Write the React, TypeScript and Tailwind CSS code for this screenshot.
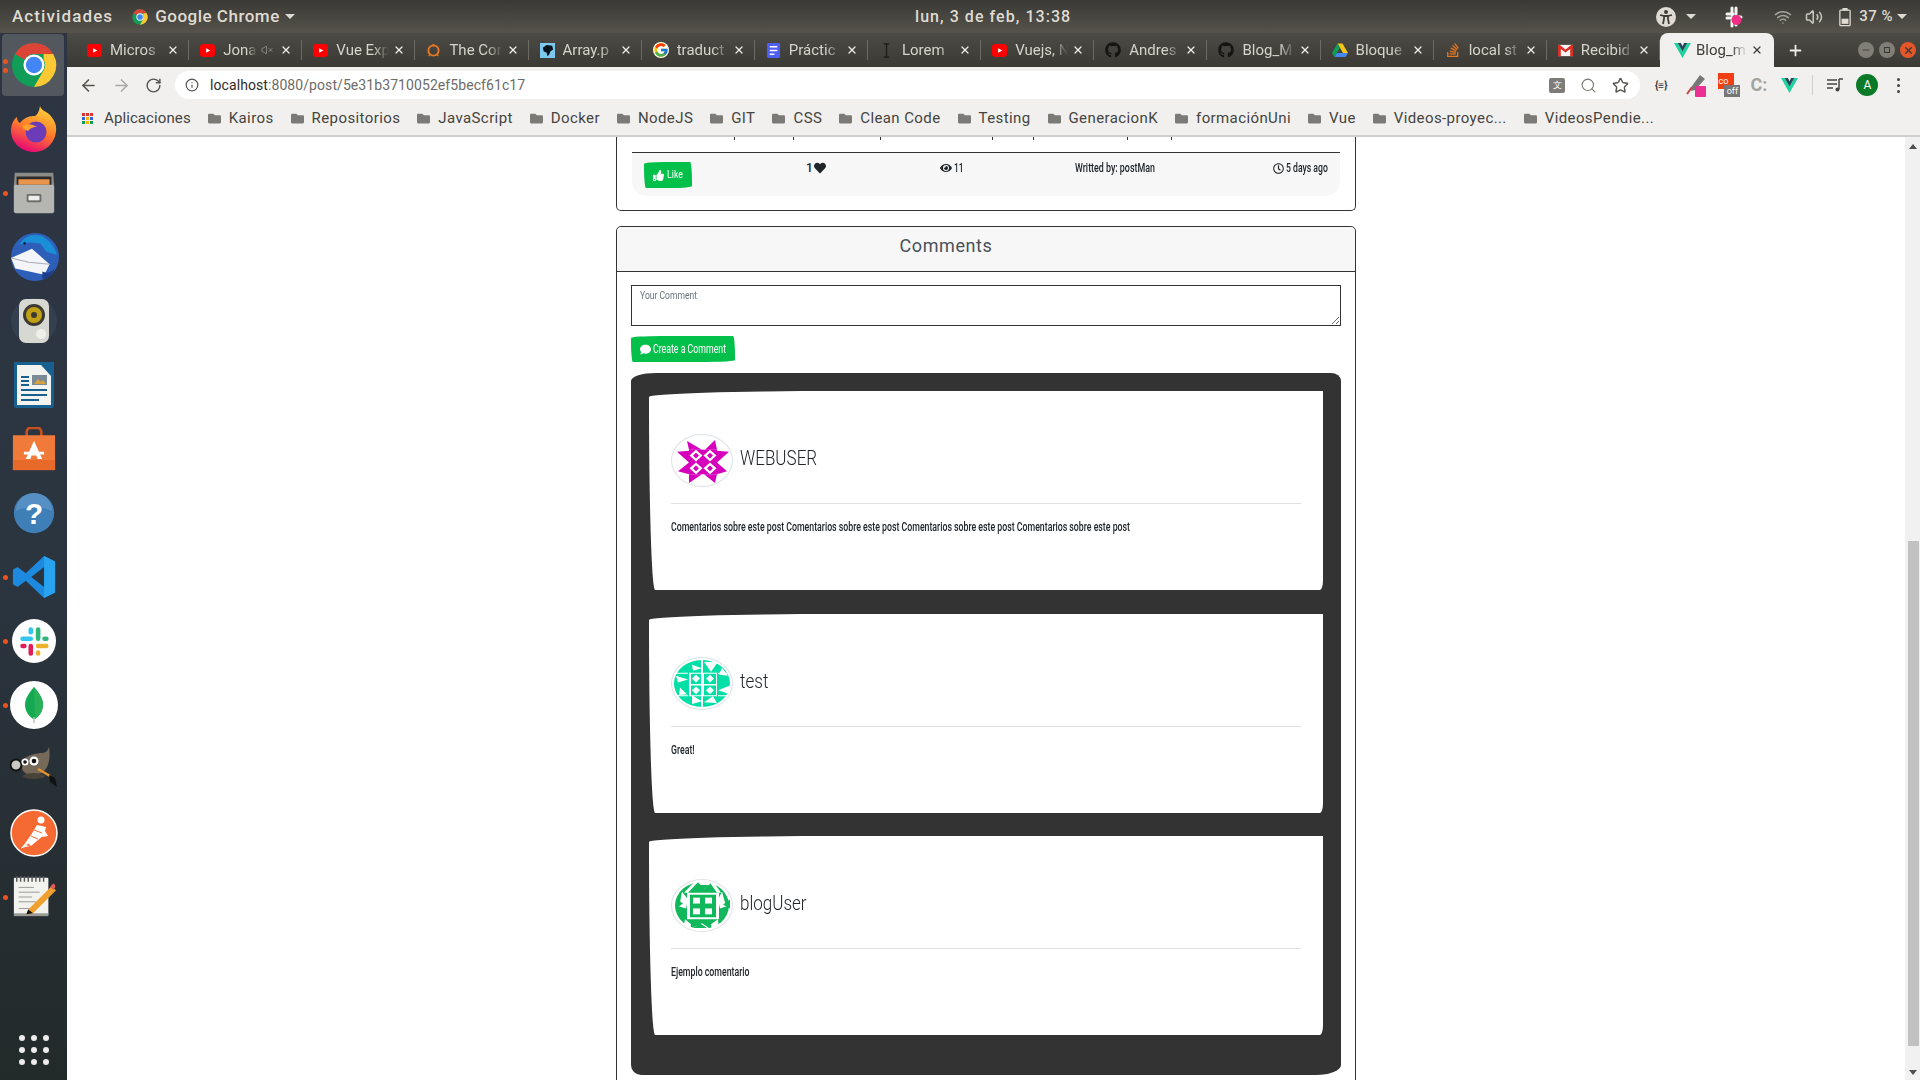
import React from 'react';
import {
  FaThumbsUp, FaHeart, FaEye, FaRegClock, FaComment, FaGithub, FaStackOverflow, FaFolder,
} from 'react-icons/fa';
import { FcGoogle } from 'react-icons/fc';
import { ArrowLeft, ArrowRight, RotateCw, Info, Search, Star, Plus, X, Minus, Wifi, Volume2, VolumeX } from 'lucide-react';

// favicons
const YouTube = () => (
  <svg viewBox="0 0 16 16" className="w-[15px] h-[15px] shrink-0">
    <rect x="0" y="1" width="16" height="14" rx="3.5" fill="#f00" />
    <path d="M6.5 5.5 11 8l-4.5 2.5z" fill="#fff" />
  </svg>
);
const CoIcon = () => (
  <svg viewBox="0 0 16 16" className="w-[15px] h-[15px] shrink-0">
    <circle cx="8" cy="8" r="5.5" fill="none" stroke="#e8771f" strokeWidth="2" />
    <circle cx="8" cy="2.5" r="1.4" fill="#e8771f" />
    <path d="M4 12l-1 2M12 12l1 2" stroke="#e8771f" strokeWidth="1.4" />
  </svg>
);
const ArrayIcon = () => (
  <svg viewBox="0 0 16 16" className="w-[15px] h-[15px] shrink-0">
    <rect width="16" height="16" fill="#7cc8ee" />
    <path d="M3 5l4-3 6 1 1 4-3 2-1 3-2 2-1-4-3-1z" fill="#06121c" />
  </svg>
);
const DocsIcon = () => (
  <svg viewBox="0 0 16 16" className="w-[15px] h-[17px] shrink-0">
    <rect x="1" width="14" height="16" rx="1.5" fill="#4e5ff0" />
    <path d="M4 4h8M4 8h8M4 12h5" stroke="#fff" strokeWidth="1.6" />
  </svg>
);
const LoremIcon = () => (
  <svg viewBox="0 0 16 16" className="w-[15px] h-[15px] shrink-0">
    <path d="M5 1h6M8 1v14M5 15h6" stroke="#1c1b18" strokeWidth="1.4" fill="none" />
  </svg>
);
const DriveIcon = () => (
  <svg viewBox="0 0 16 16" className="w-[16px] h-[16px] shrink-0">
    <path d="M5.5 1.5h5L16 11h-5z" fill="#f5c518" />
    <path d="M5.5 1.5 0 11l2.500 4 5.500-9.500z" fill="#109d58" />
    <path d="M2.500 15h11l2.500-4H5z" fill="#4688f1" />
  </svg>
);
const GmailIcon = () => (
  <svg viewBox="0 0 16 16" className="w-[15px] h-[15px] shrink-0">
    <rect y="2" width="16" height="12" fill="#f4f4f4" />
    <path d="M0 2v12h3V6.500L8 10l5-3.500V14h3V2h-2L8 7 2 2z" fill="#d93025" />
  </svg>
);
const VueIcon = ({ cls = 'w-[17px] h-[17px]' }: { cls?: string }) => (
  <svg viewBox="0 0 16 16" className={`${cls} shrink-0`}>
    <path d="M0 1h3.500L8 9l4.500-8H16L8 15z" fill="#1ed3a0" />
    <path d="M3.500 1H6.500L8 4l1.500-3h3L8 9z" fill="#24475b" />
  </svg>
);

const tabs: { title: string; icon: React.ReactNode; muted?: boolean }[] = [
  { title: 'Micros', icon: <YouTube /> },
  { title: 'Jona', icon: <YouTube />, muted: true },
  { title: 'Vue Exp', icon: <YouTube /> },
  { title: 'The Cor', icon: <CoIcon /> },
  { title: 'Array.p', icon: <ArrayIcon /> },
  { title: 'traduct', icon: <FcGoogle className="w-[16px] h-[16px] shrink-0 bg-white rounded-full" /> },
  { title: 'Práctic', icon: <DocsIcon /> },
  { title: 'Lorem', icon: <LoremIcon /> },
  { title: 'Vuejs, N', icon: <YouTube /> },
  { title: 'Andres', icon: <FaGithub className="w-[16px] h-[16px] shrink-0 text-[#161412]" /> },
  { title: 'Blog_M', icon: <FaGithub className="w-[16px] h-[16px] shrink-0 text-[#161412]" /> },
  { title: 'Bloque', icon: <DriveIcon /> },
  { title: 'local st', icon: <FaStackOverflow className="w-[16px] h-[16px] shrink-0 text-[#e8771f]" /> },
  { title: 'Recibid', icon: <GmailIcon /> },
];

const bookmarks = [
  'Kairos', 'Repositorios', 'JavaScript', 'Docker', 'NodeJS', 'GIT', 'CSS', 'Clean Code', 'Testing',
  'GeneracionK', 'formaciónUni', 'Vue', 'Videos-proyec...', 'VideosPendie...',
];

const ChromeLogo = ({ cls }: { cls: string }) => (
  <svg viewBox="0 0 48 48" className={cls}>
    <circle cx="24" cy="24" r="23" fill="#0f9d58" />
    <path d="M24 1a23 23 0 0 1 20 11.500H24a11.500 11.500 0 0 0-10 5.800L4.100 12.500A23 23 0 0 1 24 1z" fill="#db4437" />
    <path d="M44 12.500A23 23 0 0 1 24 47l10-17.200A11.500 11.500 0 0 0 34 18.300V12.500z" fill="#fcc934" />
    <circle cx="24" cy="24" r="11" fill="#fff" />
    <circle cx="24" cy="24" r="8.500" fill="#4285f4" />
  </svg>
);

// dock icons, all on a 48 box
const FirefoxLogo = () => (
  <svg viewBox="0 0 48 48" className="w-[48px] h-[48px]">
    <defs>
      <linearGradient id="ffx" x1="0.7" y1="0" x2="0.3" y2="1">
        <stop offset="0" stopColor="#ffd43a" />
        <stop offset="0.5" stopColor="#ff7a2a" />
        <stop offset="1" stopColor="#e6007a" />
      </linearGradient>
    </defs>
    <path d="M30 1c1 4 5 5 9 8 5 5 8 11 7 17-1 12-10 21-22 21C11 47 1 37 1 26 1 20 3 15 7 12c0 3 1 5 3 6 3-4 8-7 13-7 3 1 6-3 7-10z" fill="url(#ffx)" />
    <circle cx="26" cy="27" r="10.500" fill="#6b3bb8" />
    <path d="M12 21c5-3 11-2 15 1-5 0-7 2-9 4-2-1-5-2-6-5z" fill="#ffa12c" />
  </svg>
);
const FilesLogo = () => (
  <svg viewBox="0 0 48 48" className="w-[44px] h-[44px]">
    <path d="M3 2h42l1 14H2z" fill="#8b8b88" />
    <rect x="5" y="6" width="38" height="10" fill="#2c2a28" />
    <rect x="7" y="9" width="34" height="6" fill="#e8944a" />
    <rect x="2" y="15" width="44" height="31" rx="2" fill="#b5b5b2" />
    <rect x="16" y="25" width="16" height="9" rx="1.500" fill="#6b6b68" />
    <rect x="18" y="27" width="12" height="5" fill="#eee" />
  </svg>
);
const ThunderbirdLogo = () => (
  <svg viewBox="0 0 48 48" className="w-[50px] h-[50px]">
    <circle cx="25" cy="24" r="23" fill="#2e5fb8" />
    <path d="M10 12c4-8 14-11 22-8 7 4 12 10 14 18l-10-3-6-8-10-1z" fill="#1a8fd8" />
    <circle cx="15" cy="11" r="1.300" fill="#10214a" />
    <path d="M2 25l20-9 17 15-5 10-28-6z" fill="#f4f5f8" />
    <path d="M2 25l17 4 20 2" fill="none" stroke="#aab" strokeWidth="1" />
    <path d="M32 38c4 2 8 1 12-3-2 6-6 10-12 10z" fill="#1d3e8a" />
  </svg>
);
const SpeakerLogo = () => (
  <svg viewBox="0 0 48 48" className="w-[48px] h-[48px]">
    <circle cx="24" cy="24" r="23" fill="#45536a" opacity=".35" />
    <rect x="9" y="2" width="30" height="44" rx="7" fill="#d8d8d2" />
    <circle cx="24" cy="18" r="11" fill="#3b3a34" />
    <circle cx="24" cy="18" r="8" fill="#c2a114" />
    <circle cx="24" cy="18" r="3" fill="#3b3a34" />
    <circle cx="31" cy="37" r="5" fill="#efefea" />
  </svg>
);
const WriterLogo = () => (
  <svg viewBox="0 0 48 48" className="w-[48px] h-[48px]">
    <path d="M4 1h40v44a2 2 0 0 1-2 2H6a2 2 0 0 1-2-2z" fill="#18608f" />
    <path d="M7 4h24l10 11v29H7z" fill="#f3f3f0" />
    <path d="M33 3h11v11z" fill="#18608f" />
    <rect x="22" y="14" width="15" height="10" fill="#7b8a95" />
    <path d="M24 23l4-5 3 3 2-2 3 4z" fill="#d7a23a" />
    <path d="M11 16h8M11 20h8M11 24h8M11 29h26M11 34h26M11 39h18" stroke="#18608f" strokeWidth="2" />
  </svg>
);
const SoftwareLogo = () => (
  <svg viewBox="0 0 48 48" className="w-[44px] h-[44px]">
    <path d="M16 12V6c0-3 2-5 4-5h8c2 0 4 2 4 5v6" fill="none" stroke="#c8501e" strokeWidth="3" />
    <rect x="1" y="9" width="46" height="38" fill="#ef7a3a" />
    <rect x="1" y="36" width="46" height="11" fill="#e86a2a" />
    <path d="M24 15l9 20h-5l-1.500-4h-5L20 35h-5z" fill="#fff" />
    <rect x="13" y="27" width="22" height="3" fill="#fff" />
  </svg>
);
const HelpLogo = () => (
  <svg viewBox="0 0 48 48" className="w-[42px] h-[42px]">
    <circle cx="24" cy="24" r="23" fill="#3f7fb8" />
    <path d="M3 22a21 21 0 0 1 42 0c-10-6-32-6-42 0z" fill="#6da0cd" opacity=".5" />
    <text x="24" y="36" textAnchor="middle" fontSize="34" fontWeight="700" fill="#fff" fontFamily="Liberation Sans, sans-serif">?</text>
  </svg>
);
const VsCodeLogo = () => (
  <svg viewBox="0 0 48 48" className="w-[44px] h-[44px]">
    <path d="M35 1l12 6v34l-12 6-20-19-9 7-5-3V16l5-3 9 7zM35 13L21 24l14 11z" fill="#1d8ae0" />
    <path d="M35 1l12 6v34l-12 6z" fill="#27a3ef" />
  </svg>
);
const SlackLogo = () => (
  <svg viewBox="0 0 48 48" className="w-[44px] h-[44px]">
    <circle cx="24" cy="24" r="24" fill="#fff" />
    <rect x="9" y="19" width="14" height="5" rx="2.500" fill="#36c5f0" />
    <rect x="18" y="9" width="5" height="8" rx="2.500" fill="#36c5f0" />
    <rect x="26" y="9" width="5" height="15" rx="2.500" fill="#2eb67d" />
    <rect x="33" y="19" width="7" height="5" rx="2.500" fill="#2eb67d" />
    <rect x="26" y="27" width="14" height="5" rx="2.500" fill="#ecb22e" />
    <rect x="26" y="34" width="5" height="6" rx="2.500" fill="#ecb22e" />
    <rect x="18" y="27" width="5" height="13" rx="2.500" fill="#e01e5a" />
    <rect x="9" y="27" width="7" height="5" rx="2.500" fill="#e01e5a" />
  </svg>
);
const MongoLogo = () => (
  <svg viewBox="0 0 48 48" className="w-[48px] h-[48px]">
    <circle cx="24" cy="24" r="24" fill="#fff" />
    <path d="M24 6c6 7 9 12 9 18 0 7-5 12-8 14h-2c-3-2-8-7-8-14 0-6 3-11 9-18z" fill="#13aa52" />
    <path d="M24 6c6 7 9 12 9 18 0 7-5 12-8 14z" fill="#2bb05a" />
    <path d="M24 36v6" stroke="#b8c4bc" strokeWidth="1.500" />
  </svg>
);
const GimpLogo = () => (
  <svg viewBox="0 0 48 48" className="w-[48px] h-[48px]">
    <path d="M11 16c6-6 16-8 21-8 4 0 6-3 7-6 1 7 1 14-2 20-2 5-8 8-15 8s-12-5-11-14z" fill="#75695a" />
    <ellipse cx="24" cy="31" rx="11" ry="3" fill="#4a4339" />
    <circle cx="6" cy="20" r="5.500" fill="#c9c9c4" stroke="#111" strokeWidth="2" />
    <circle cx="15" cy="17" r="3.500" fill="#fff" />
    <circle cx="15" cy="17" r="1.800" fill="#111" />
    <circle cx="24" cy="16" r="4.500" fill="#fff" />
    <circle cx="24" cy="16" r="2.300" fill="#111" />
    <path d="M28 24l12 7" stroke="#e3942f" strokeWidth="2.500" />
    <path d="M39 30l6 3 2 9-7-5z" fill="#111" />
  </svg>
);
const PostmanLogo = () => (
  <svg viewBox="0 0 48 48" className="w-[48px] h-[48px]">
    <circle cx="24" cy="24" r="23" fill="#f56a32" stroke="#fff" strokeWidth="1.500" />
    <circle cx="31" cy="11" r="3.500" fill="#fff" />
    <path d="M27 16l9 2-2 8-13 11-2.500-2.500L11 40l5-7 5-7z" fill="#fff" />
    <path d="M35 22l3 5-6 1zM20 37l-9 2 3-3z" fill="#fff" />
    <path d="M24 21l8 3M21 27l7 3" stroke="#f56a32" strokeWidth="1" />
  </svg>
);
const NotepadLogo = () => (
  <svg viewBox="0 0 48 48" className="w-[46px] h-[46px]">
    <rect x="3" y="4" width="36" height="39" rx="1" fill="#f2f2ee" />
    <rect x="3" y="41" width="36" height="3" fill="#9a9a96" />
    <path d="M6 2v6M10 2v6M14 2v6M18 2v6M22 2v6M26 2v6M30 2v6M34 2v6" stroke="#555" strokeWidth="1.500" />
    <path d="M8 14h16M8 19h22M8 24h14M8 29h18M8 36h14" stroke="#999" strokeWidth="1" />
    <path d="M18 37l24-24 5 4-24 24-7 1z" fill="#efa02e" />
    <path d="M41 13l3-3c1-1 3 3 2 4l-2 3z" fill="#e25a5a" />
    <path d="M18 37l5 4-7 1z" fill="#111" />
  </svg>
);

const dock: { icon: React.ReactNode; dots?: number; active?: boolean }[] = [
  { icon: <ChromeLogo cls="w-[46px] h-[46px]" />, dots: 2, active: true },
  { icon: <FirefoxLogo /> },
  { icon: <FilesLogo />, dots: 1 },
  { icon: <ThunderbirdLogo /> },
  { icon: <SpeakerLogo /> },
  { icon: <WriterLogo /> },
  { icon: <SoftwareLogo /> },
  { icon: <HelpLogo /> },
  { icon: <VsCodeLogo />, dots: 1 },
  { icon: <SlackLogo />, dots: 1 },
  { icon: <MongoLogo />, dots: 1 },
  { icon: <GimpLogo /> },
  { icon: <PostmanLogo /> },
  { icon: <NotepadLogo />, dots: 1 },
];

const Dock: React.FC = () => (
  <aside className="w-[67px] shrink-0 flex flex-col bg-gradient-to-b from-[#2d3542] via-[#2b3540] to-[#232a2a]">
    {dock.map((d, i) => (
      <div key={i} className="relative h-[64px] flex items-center justify-center">
        {d.active && <div className="absolute left-[2px] right-[3px] top-[1px] bottom-[1px] rounded-[4px] bg-[#53585f]" />}
        {d.dots === 1 && <span className="absolute left-[3px] top-[30px] w-[5px] h-[5px] rounded-full bg-[#e95420]" />}
        {d.dots === 2 && (
          <span className="absolute left-[3px] top-[26px] flex flex-col gap-[4px]">
            <span className="w-[5px] h-[5px] rounded-full bg-[#e95420]" />
            <span className="w-[5px] h-[5px] rounded-full bg-[#e95420]" />
          </span>
        )}
        <div className="relative flex items-center justify-center">{d.icon}</div>
      </div>
    ))}
    <div className="mt-auto mb-[15px] grid grid-cols-3 gap-[6px] w-[30px] mx-auto">
      {Array.from({ length: 9 }).map((_, i) => (
        <span key={i} className="w-[6px] h-[6px] rounded-full bg-[#ececec]" />
      ))}
    </div>
  </aside>
);

const TopBar: React.FC = () => (
  <header className='h-[33px] shrink-0 flex items-center bg-gradient-to-b from-[#3a3935] to-[#55534b] text-[#dfdbd2] font-["Roboto",sans-serif] font-medium text-[16px]'>
    <div className="w-[915px] shrink-0 flex items-center">
      <span className="ml-[12px] text-[17px] tracking-[1.1px]">Actividades</span>
      <ChromeLogo cls="w-[16px] h-[16px] ml-[19px] mr-[7px]" />
      <span className="text-[17px] tracking-[0.5px]">Google Chrome</span>
      <span className="ml-[5px] w-0 h-0 border-x-[5px] border-x-transparent border-t-[5px] border-t-[#dfdbd2]" />
    </div>
    <span className="tracking-[1.05px]">lun, 3 de feb, 13:38</span>
    <div className="ml-auto flex items-center pr-[13px]">
      <span className="w-[20px] h-[20px] rounded-full bg-[#dfdbd2] flex items-center justify-center">
        <svg viewBox="0 0 20 20" className="w-[20px] h-[20px]">
          <circle cx="10" cy="5" r="2" fill="#3f3e39" />
          <path d="M4 8l4 1v3l-1 5M16 8l-4 1v3l1 5M8 9h4" stroke="#3f3e39" strokeWidth="1.800" fill="none" />
        </svg>
      </span>
      <span className="ml-[10px] w-0 h-0 border-x-[5px] border-x-transparent border-t-[5px] border-t-[#dfdbd2]" />
      <svg viewBox="0 0 24 24" className="ml-[26px] w-[24px] h-[24px]">
        <path d="M10 3v7M14 3v6M5 9h6M5 13h5M13 12h6M14 16v4M10 16v5" stroke="#f4f4f0" strokeWidth="3" strokeLinecap="round" />
        <circle cx="14.500" cy="15" r="5" fill="#ef2f86" />
      </svg>
      <Wifi className="ml-[28px] w-[18px] h-[18px] text-[#a5a39b]" />
      <Volume2 className="ml-[13px] w-[18px] h-[18px] text-[#c9c6bd]" />
      <svg viewBox="0 0 14 22" className="ml-[16px] w-[12px] h-[20px]">
        <rect x="1" y="3" width="12" height="18" rx="1" fill="none" stroke="#dfdbd2" strokeWidth="1.500" />
        <rect x="4" y="0.500" width="6" height="3" fill="#dfdbd2" />
        <rect x="3" y="13" width="8" height="6" fill="#dfdbd2" />
      </svg>
      <span className="ml-[8px] text-[15px] tracking-[0.5px]">37 %</span>
      <span className="ml-[4px] w-0 h-0 border-x-[5px] border-x-transparent border-t-[5px] border-t-[#dfdbd2]" />
    </div>
  </header>
);

const TabStrip: React.FC = () => (
  <div className='h-[34px] shrink-0 flex items-stretch pl-[9px] bg-gradient-to-b from-[#4c4b45] to-[#3a3934] font-["Roboto",sans-serif] text-[15px] text-[#d6d3ca]'>
    {tabs.map((t) => (
      <div key={t.title} className="w-[113.150px] shrink-0 flex items-center pl-[11px] pr-[9px] relative border-r border-[#6b6a63] my-[7px]">
        {t.icon}
        <span className="ml-[8px] mr-[4px] overflow-hidden whitespace-nowrap flex-1 [mask-image:linear-gradient(to_right,black_70%,transparent)]">{t.title}</span>
        {t.muted && <VolumeX className="w-[12px] h-[12px] text-[#8a8880] mr-[7px]" />}
        <X className="w-[12px] h-[12px] text-[#f0eee8] shrink-0" strokeWidth={2.500} />
      </div>
    ))}
    <div className="w-[114px] shrink-0 bg-[#f1f0ee] rounded-t-[8px] flex items-center pl-[14px] pr-[11px] text-[#3d3c37]">
      <VueIcon />
      <span className="ml-[5px] mr-[4px] whitespace-nowrap flex-1 [mask-image:linear-gradient(to_right,black_70%,transparent)]">Blog_m</span>
      <X className="w-[12px] h-[12px] text-[#3d3c37] shrink-0" strokeWidth={2.500} />
    </div>
    <Plus className="ml-[13px] self-center w-[17px] h-[17px] text-[#f0eee8]" strokeWidth={2.500} />
    <div className="ml-auto pr-[4px] flex items-center gap-[5px]">
      <span className="w-[16px] h-[16px] rounded-full bg-[#807e76] flex items-center justify-center"><Minus className="w-[10px] h-[10px] text-[#3a3934]" /></span>
      <span className="w-[16px] h-[16px] rounded-full bg-[#807e76] flex items-center justify-center"><span className="w-[6px] h-[6px] border border-[#3a3934]" /></span>
      <span className="w-[16px] h-[16px] rounded-full bg-[#e2562a] flex items-center justify-center"><X className="w-[11px] h-[11px] text-[#3a3934]" strokeWidth={3} /></span>
    </div>
  </div>
);

const Toolbar: React.FC = () => (
  <div className='h-[35px] shrink-0 flex items-center pt-[1px] bg-[#f1f0ee] font-["Roboto",sans-serif] text-[#55534e]'>
    <ArrowLeft className="ml-[12px] w-[19px] h-[19px]" />
    <ArrowRight className="ml-[14px] w-[19px] h-[19px] text-[#aaa9a5]" />
    <RotateCw className="ml-[14px] w-[17px] h-[17px]" />
    <div className="ml-[13px] w-[1465px] h-[28px] rounded-full bg-white flex items-center pl-[10px] pr-[11px]">
      <Info className="w-[14px] h-[14px]" />
      <span className="ml-[11px] text-[14px] tracking-[0.08px]"><span className="text-[#2c2b28]">localhost</span><span className="text-[#6d6c67]">:8080/post/5e31b3710052ef5becf61c17</span></span>
      <div className="ml-auto flex items-center gap-[15px]">
        <span className="w-[16px] h-[15px] bg-[#7d7c78] rounded-[2px] text-white text-[9px] leading-[15px] text-center">文</span>
        <Search className="w-[17px] h-[17px] text-[#77766f]" strokeWidth={1.500} />
        <Star className="w-[17px] h-[17px]" />
      </div>
    </div>
    <span className="ml-[15px] text-[10px] font-bold text-[#333]">{'{≡}'}</span>
    <svg viewBox="0 0 24 24" className="ml-[17px] w-[24px] h-[24px]">
      <path d="M16 2l5 4-10 11-4 1 1-5z" fill="#777" />
      <path d="M3 21l5-7" stroke="#c44" strokeWidth="2" />
      <rect x="11" y="13" width="11" height="11" rx="1" fill="#ec2f92" />
    </svg>
    <span className="relative ml-[10px] w-[22px] h-[24px]">
      <span className="absolute left-0 top-0 w-[16px] h-[16px] bg-[#f13e12] text-white text-[9px] leading-[16px]">co</span>
      <span className="absolute right-0 bottom-0 w-[16px] h-[12px] bg-[#777] text-white text-[9px] leading-[12px] text-center">off</span>
    </span>
    <span className="ml-[10px] text-[18px] font-bold text-[#a3a3a0] leading-none">C:</span>
    <VueIcon cls="ml-[14px] w-[17px] h-[17px]" />
    <span className="ml-[14px] w-px h-[20px] bg-[#cfcecb]" />
    <svg viewBox="0 0 16 16" className="ml-[14px] w-[16px] h-[16px]">
      <path d="M0 3h10M0 7h10M0 11h6M12 2h4M12 2v10" stroke="#444" strokeWidth="1.500" fill="none" />
      <circle cx="10.500" cy="12.500" r="2" fill="#444" />
    </svg>
    <span className="ml-[13px] w-[22px] h-[22px] rounded-full bg-[#0b7a28] text-white text-[12px] leading-[22px] text-center">A</span>
    <span className="ml-[19px] flex flex-col gap-[3px]">
      <span className="w-[3px] h-[3px] rounded-full bg-[#444]" />
      <span className="w-[3px] h-[3px] rounded-full bg-[#444]" />
      <span className="w-[3px] h-[3px] rounded-full bg-[#444]" />
    </span>
  </div>
);

const BookmarksBar: React.FC = () => (
  <div className='h-[35px] shrink-0 flex items-center bg-[#f1f0ee] border-b-2 border-[#cfcfcc] pl-[15px] font-["Roboto",sans-serif] text-[15px] text-[#45443f] tracking-[0.4px]'>
    <span className="grid grid-cols-3 gap-[1px] w-[11px] mr-[11px]">
      {['#d33','#d33','#d33','#3367d6','#f4b400','#3367d6','#0f9d58','#f4b400','#0f9d58'].map((c, i) => (
        <span key={i} className="w-[3px] h-[3px]" style={{ backgroundColor: c }} />
      ))}
    </span>
    <span className="tracking-[0.1px]">Aplicaciones</span>
    {bookmarks.map((b) => (
      <span key={b} className="flex items-center ml-[17px]">
        <FaFolder className="w-[13px] h-[13px] text-[#7b7a76] mr-[8px]" />
        {b}
      </span>
    ))}
  </div>
);

// gravatar-like identicons
const Avatar = ({ children }: { children: React.ReactNode }) => (
  <div className="w-[62px] h-[53px] shrink-0 overflow-hidden border border-[#dee2e6] rounded-[50%] bg-white">
    <svg viewBox="0 0 60 52" preserveAspectRatio="none" className="w-full h-full">{children}</svg>
  </div>
);

const WebUserAvatar = () => (
  <Avatar>
    <g fill="#d600bc">
      <path d="M15 6l15 9H17zM43 5L33 15h12zM5 17l12-1v12zM57 17l-12-1v12zM6 37l11-9v12zM55 37L45 28v12zM17 49l13-9H17zM43 49L32 40h13z" />
      <rect x="17" y="15" width="28" height="25" />
    </g>
    <g fill="#fff">
      <path d="M24 15l6.500 6-6.500 6-6.500-6zM38 15l6.500 6-6.500 6-6.500-6zM24 28l6.500 6-6.500 6-6.500-6zM38 28l6.500 6-6.500 6-6.500-6z" />
    </g>
    <g fill="#d600bc">
      <path d="M24 18l3 3-3 3-3-3zM38 18l3 3-3 3-3-3zM24 31l3 3-3 3-3-3zM38 31l3 3-3 3-3-3z" />
    </g>
  </Avatar>
);
const TestAvatar = () => (
  <Avatar>
    <ellipse cx="30" cy="26" rx="28" ry="24" fill="#00dfa5" />
    <g fill="#fff">
      <path d="M20 7l10 3.500L21 13zM32 4h14l-7 10zM4 18l12 4-10 3zM58 28l-12 5 12 4zM20 47l10-3-10-6zM32 45l9-6 4 7zM8 30l7 7-8 1zM50 10l6 8-9-1z" />
      <rect x="17" y="15" width="28" height="24" />
      <path d="M16 15H0v1h16zM46 15h14v1H46zM16 38H0v1h16zM46 38h14v1H46zM29 0h2v15h-2zM29 39h2v13h-2z" />
    </g>
    <g fill="#00dfa5">
      <path d="M19 16h10v10.500H19zM32 16h12v10.500H32zM19 28h10v10H19zM32 28h12v10H32z" />
    </g>
    <g fill="#fff">
      <path d="M24 17l4 4-4 4-4-4zM38 17l4 4-4 4-4-4zM24 29l4 4-4 4-4-4zM38 29l4 4-4 4-4-4z" />
    </g>
  </Avatar>
);
const BlogUserAvatar = () => (
  <Avatar>
    <ellipse cx="30" cy="26" rx="27" ry="24" fill="#10b85b" />
    <g fill="#fff">
      <rect x="15" y="13" width="32" height="27" />
      <path d="M24 0h4l-12 13h-4zM36 0h4l9 13h-4zM10 12l6 8-2 9-10-3 4-3zM50 12l-4 8 2 9 9-3-4-3zM13 40l6 5-1 7h-7zM46 40l-7 5 1 7h7zM24 0h14v4l-6 5zM18 52l4-4 8-4 7 5v3z" />
    </g>
    <g fill="#10b85b">
      <rect x="18" y="15" width="26" height="23" />
      <path d="M4 19l7 5-7 5zM58 20l-7 5 7 4zM24 5h13l-6 5zM21 49h14l-7-5z" />
    </g>
    <g fill="#fff">
      <rect x="21" y="18" width="7" height="6" />
      <rect x="33" y="18" width="7" height="6" />
      <rect x="21" y="29" width="7" height="6" />
      <rect x="33" y="29" width="7" height="6" />
    </g>
  </Avatar>
);

const comments = [
  { user: 'WEBUSER', text: 'Comentarios sobre este post Comentarios sobre este post Comentarios sobre este post Comentarios sobre este post', avatar: <WebUserAvatar /> },
  { user: 'test', text: 'Great!', avatar: <TestAvatar /> },
  { user: 'blogUser', text: 'Ejemplo comentario', avatar: <BlogUserAvatar /> },
];

const CommentCard = ({ user, text, avatar }: { user: string; text: string; avatar: React.ReactNode }) => (
  <div className="h-[199px] shrink-0 bg-white rounded-[190px_0_3px_6px/6px_0_10px_190px] pt-[43px] px-[22px]">
    <div className="flex items-center">
      {avatar}
      <span className="ml-[7px] pb-[4px] text-[21px] font-light text-[#212529] leading-none origin-left scale-x-[0.81] whitespace-nowrap">{user}</span>
    </div>
    <div className="mt-[16px] border-t border-[#dfdfdf]" />
    <p className="mt-[15px] text-[12px] font-medium leading-[16px] text-[#212529] origin-left scale-x-[0.73] whitespace-nowrap">{text}</p>
  </div>
);

const ticks = ['ml-[102px]', 'ml-[58px]', 'ml-[86px]', 'ml-[111px]', 'ml-[40px]', 'ml-[93px]', 'ml-[43px]'];

const Page: React.FC = () => (
  <main className='flex-1 min-h-0 flex bg-white font-["Roboto",sans-serif]'>
    <div className="flex-1 min-w-0 overflow-hidden">
      <div className="w-[740px] mx-auto text-[#212529]">
        {/* end of the post card, scrolled up */}
        <section className="h-[74px] border-x border-b border-[#333] rounded-b-[5px] px-[15px]">
          <div className="h-[3px] flex items-start">
            {ticks.map((t) => (
              <span key={t} className={`${t} w-px h-[3px] bg-[#333]`} />
            ))}
          </div>
          <div className="mt-[12px] h-[44px] border-t border-[#333] bg-[#f7f7f7] rounded-b-[15px] flex items-start pl-[12px] text-[12px] font-medium">
            <button className="mt-[9px] w-[48px] h-[26px] bg-[#03c04a] text-white text-[11px] font-normal rounded-[20px_2px_20px_2px/2px_20px_2px_20px] flex items-center pl-[9px] gap-[3px]">
              <FaThumbsUp className="w-[11px] h-[11px]" />
              <span className="w-[16px] origin-left scale-x-[0.8]">Like</span>
            </button>
            <span className="ml-[114px] mt-[7px] flex items-center gap-[1px] h-[16px]">1 <FaHeart className="w-[12px] h-[12px]" /></span>
            <span className="ml-[114px] mt-[7px] flex items-center gap-[2px] h-[16px]">
              <FaEye className="w-[12px] h-[12px]" />
              <span className="w-[9px] origin-left scale-x-[0.7]">11</span>
            </span>
            <span className="ml-[112px] mt-[7px] w-[80px] h-[16px] leading-[16px] whitespace-nowrap origin-left scale-x-[0.74]">Writted by: postMan</span>
            <span className="ml-auto mr-[13px] mt-[7px] flex items-center gap-[2px] h-[16px]">
              <FaRegClock className="w-[11px] h-[11px]" />
              <span className="w-[41px] whitespace-nowrap origin-left scale-x-[0.72]">5 days ago</span>
            </span>
          </div>
        </section>

        <section className="mt-[15px] border border-[#333] rounded-t-[5px] h-[900px]">
          <div className="h-[45px] bg-[#f7f7f7] border-b border-[#333] rounded-t-[5px] flex items-center justify-center pr-[80px] pb-[8px] text-[18px] text-[#495057] tracking-[0.6px]">
            Comments
          </div>
          <div className="px-[14px] pt-[13px]">
            <div className="relative">
              <textarea
                aria-label="Your Comment"
                className="block w-full h-[41px] border border-[#333] bg-white outline-none"
              />
              <span className="absolute left-[9px] top-[3px] w-[55px] text-[11px] leading-[15px] text-[#6c757d] whitespace-nowrap origin-left scale-x-[0.78] pointer-events-none">Your Comment</span>
            </div>
            <button className="mt-[10px] w-[104px] h-[26px] bg-[#03c04a] text-white text-[12px] rounded-[30px_2px_30px_2px/2px_20px_2px_20px] flex items-center pl-[9px] gap-[2px]">
              <FaComment className="w-[11px] h-[11px] shrink-0" />
              <span className="w-[72px] whitespace-nowrap text-left origin-left scale-x-[0.73]">Create a Comment</span>
            </button>
            <div className="mt-[11px] w-full bg-[#333333] rounded-[25px_10px_25px_10px/8px_8px_10px_10px] px-[18px] pt-[18px] pb-[40px] flex flex-col gap-[23.500px]">
              {comments.map((c) => (
                <CommentCard key={c.user} {...c} />
              ))}
            </div>
          </div>
        </section>
      </div>
    </div>

    {/* scrollbar */}
    <div className="w-[15px] shrink-0 bg-[#f1f1f1] flex flex-col items-center pl-[1px]">
      <span className="mt-[7px] w-0 h-0 border-x-[4px] border-x-transparent border-b-[5px] border-b-[#505050]" />
      <span className="mt-[392px] w-[11px] h-[505px] bg-[#c1c1c1]" />
      <span className="mt-auto mb-[5px] w-0 h-0 border-x-[4px] border-x-transparent border-t-[5px] border-t-[#505050]" />
    </div>
  </main>
);

const App: React.FC = () => (
  <div className="w-[1920px] h-screen overflow-hidden flex flex-col">
    <TopBar />
    <div className="flex-1 min-h-0 flex">
      <Dock />
      <div className="flex-1 min-w-0 flex flex-col">
        <TabStrip />
        <Toolbar />
        <BookmarksBar />
        <Page />
      </div>
    </div>
  </div>
);

export default App;
